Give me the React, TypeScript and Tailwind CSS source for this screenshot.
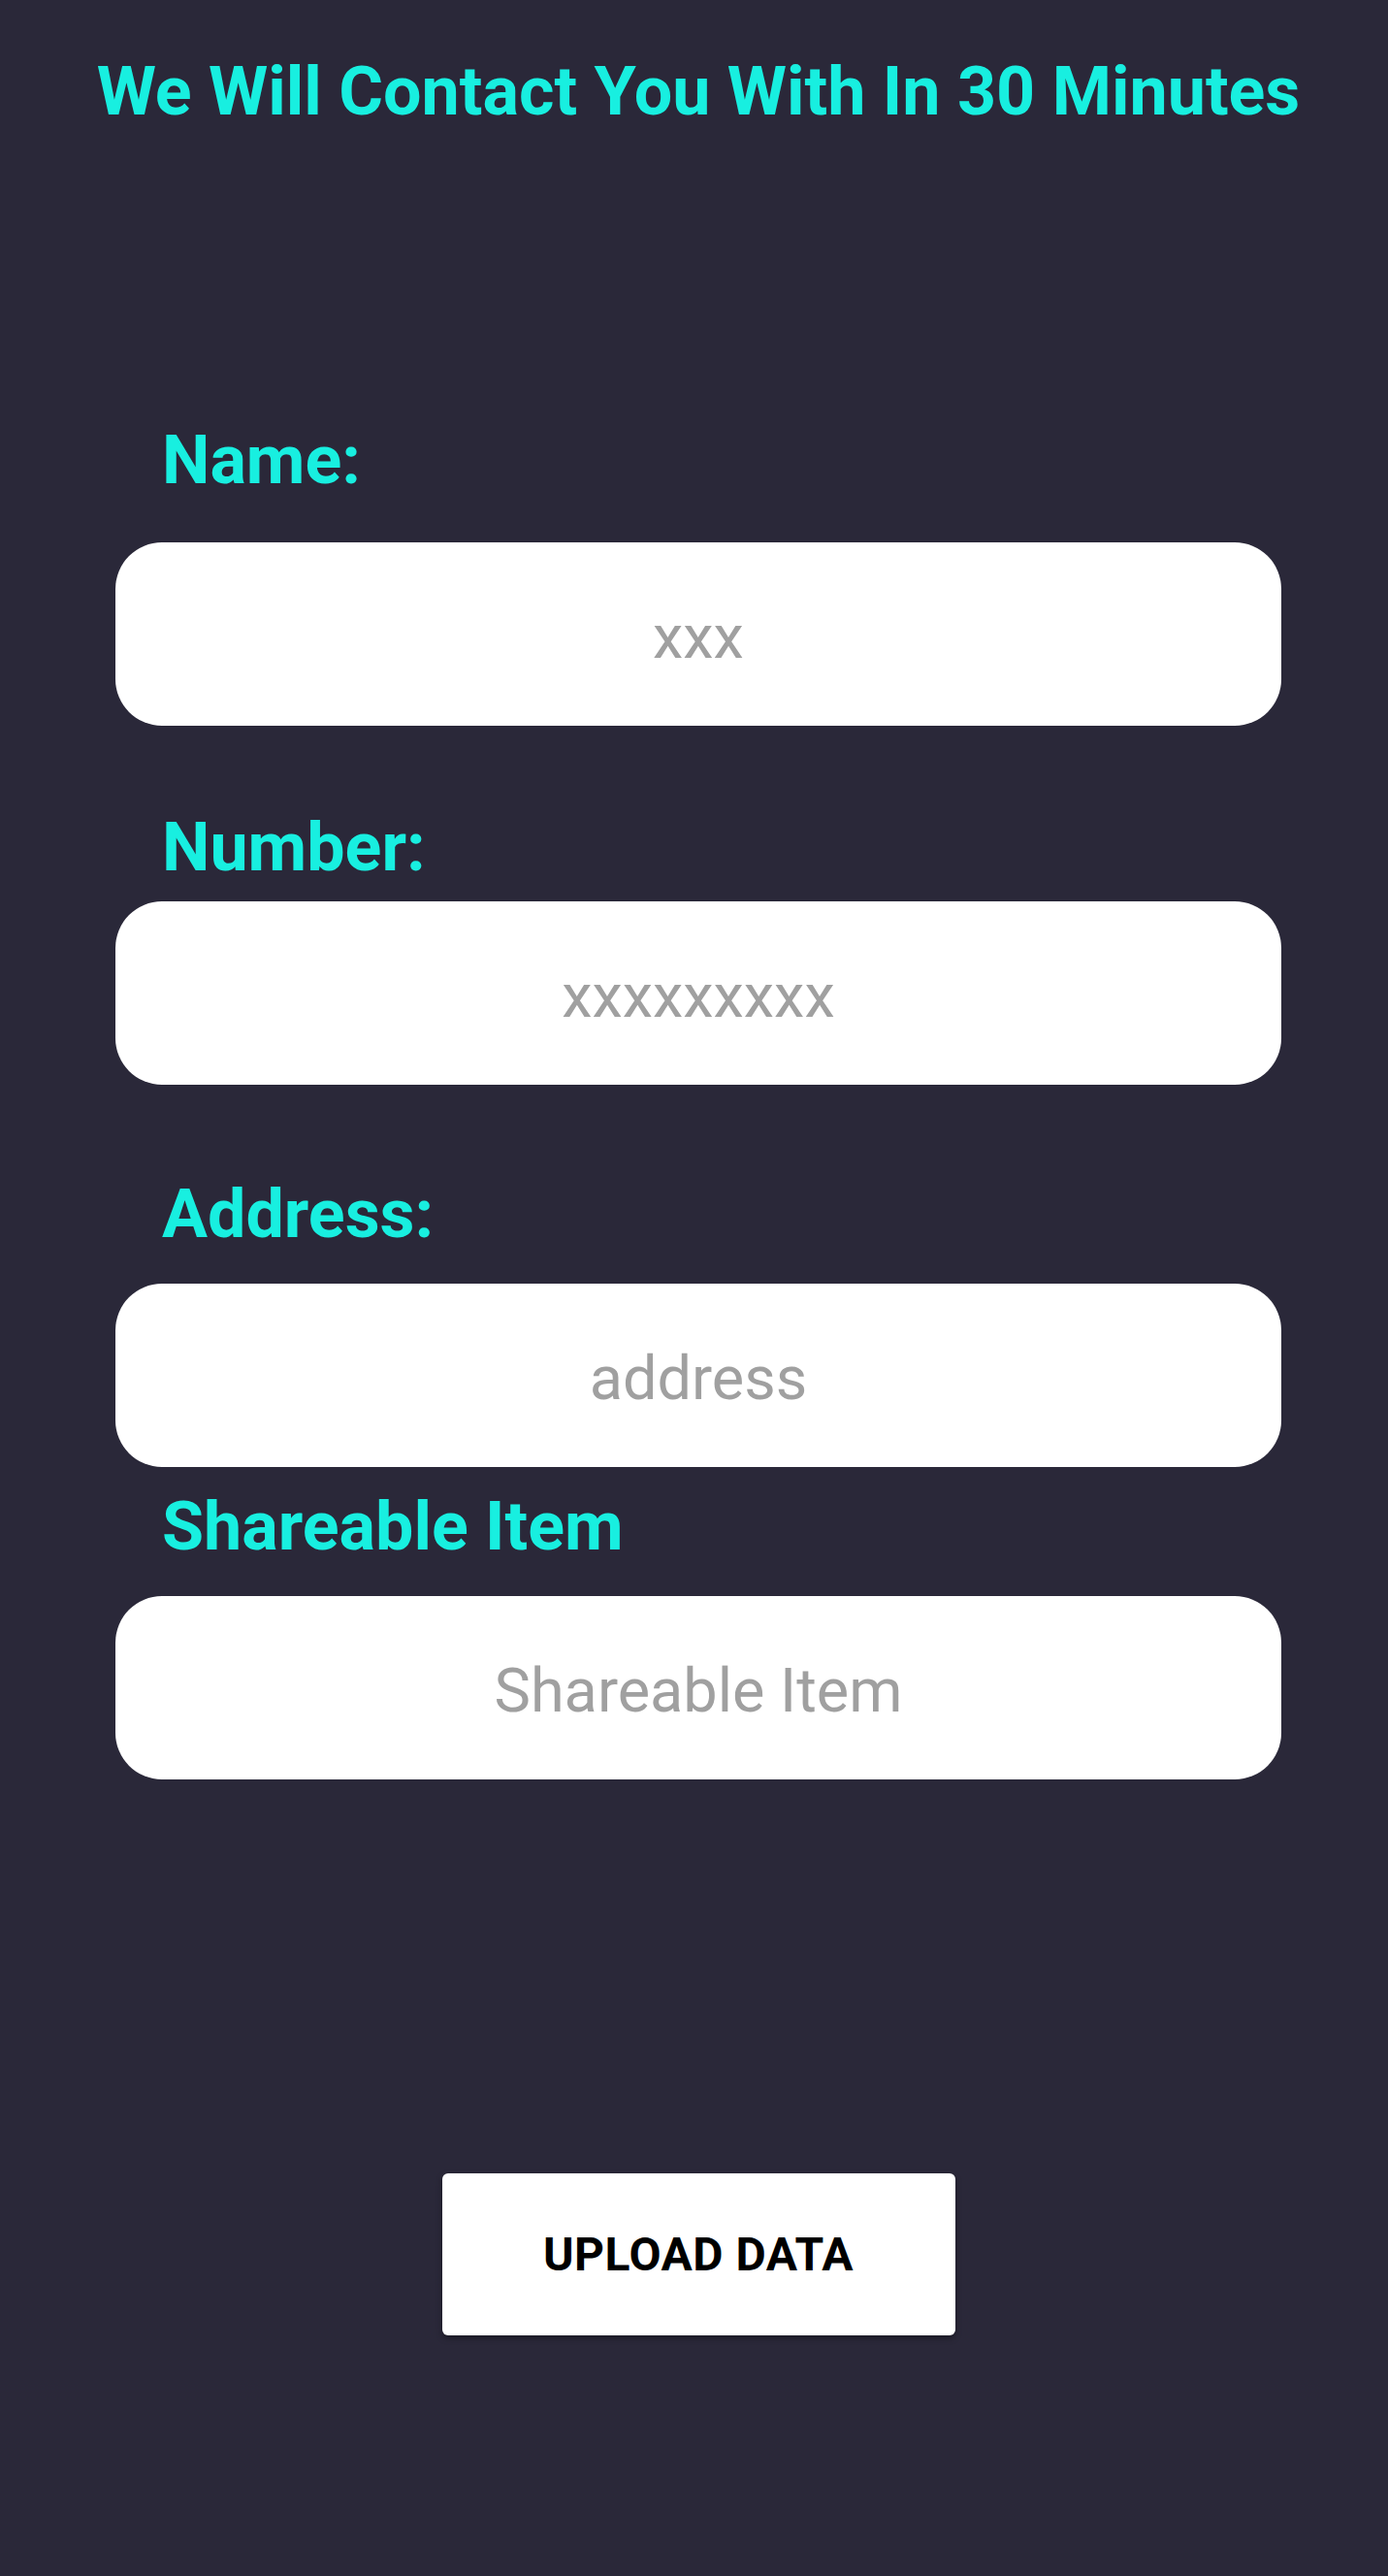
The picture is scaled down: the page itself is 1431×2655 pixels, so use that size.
import { useState } from "react";

// form fields, top to bottom
const FIELDS = [
  { key: "name", label: "Name:", placeholder: "xxx", labelGap: "mt-[298px]", inputGap: "mt-[44px]" },
  { key: "number", label: "Number:", placeholder: "xxxxxxxxx", labelGap: "mt-[84px]", inputGap: "mt-[15px]" },
  { key: "address", label: "Address:", placeholder: "address", labelGap: "mt-[92px]", inputGap: "mt-[31px]" },
  { key: "item", label: "Shareable Item", placeholder: "Shareable Item", labelGap: "mt-[20px]", inputGap: "mt-[31px]" },
];

export default function App() {
  const [values, setValues] = useState<Record<string, string>>({});

  return (
    <div className="min-h-[2655px] bg-[#2a2839] pl-[9px] font-['Roboto','Liberation_Sans',sans-serif]">
      {/* 헤더 */}
      <h1 className="pt-[53px] text-center text-[70px] font-bold leading-[82px] text-[#18efe0]">
        We Will Contact You With In 30 Minutes
      </h1>

      <form
        className="mx-auto flex w-[1202px] flex-col"
        onSubmit={(e) => e.preventDefault()}
      >
        {FIELDS.map((f) => (
          <div key={f.key} className="flex flex-col">
            <label
              htmlFor={f.key}
              className={`${f.labelGap} ml-[48px] text-[70px] font-bold leading-[82px] text-[#18efe0]`}
            >
              {f.label}
            </label>
            <input
              id={f.key}
              type="text"
              value={values[f.key] ?? ""}
              onChange={(e) => setValues({ ...values, [f.key]: e.target.value })}
              placeholder={f.placeholder}
              className={`${f.inputGap} h-[189px] w-full rounded-[48px] bg-white pt-[6px] text-center text-[63px] text-[#333] outline-none placeholder:text-[#a0a0a0]`}
            />
          </div>
        ))}

        {/* 업로드 버튼 */}
        <button
          type="submit"
          className="mx-auto mt-[406px] h-[167px] w-[529px] rounded-[6px] bg-white text-[48px] font-bold tracking-[0.5px] text-black shadow-[0_3px_6px_rgba(0,0,0,0.35)]"
        >
          UPLOAD DATA
        </button>
      </form>
    </div>
  );
}
